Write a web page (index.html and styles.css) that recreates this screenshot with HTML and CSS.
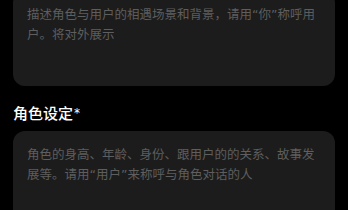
FILE: index.html
```html
<!DOCTYPE html>
<html lang="zh-CN">

<head>
    <meta charset="UTF-8">
    <meta name="viewport" content="width=device-width, initial-scale=1.0">
    <title>角色设定</title>
    <link rel="stylesheet" href="styles.css">
</head>

<body>
    <div class="form">
        <div class="field field--first">
            <div class="text-box">
                <span class="placeholder">描述角色与用户的相遇场景和背景，请用“你”称呼用户。将对外展示</span>
            </div>
        </div>

        <div class="field">
            <label class="field__label">角色设定<span class="required">*</span></label>
            <div class="text-box">
                <span class="placeholder">角色的身高、年龄、身份、跟用户的的关系、故事发展等。请用“用户”来称呼与角色对话的人</span>
            </div>
        </div>
    </div>
</body>

</html>
```

FILE: styles.css
```css
html,
body {
    margin: 0;
    padding: 0;
    background-color: #000;
    overflow: hidden;
}

body {
    font-family: "DejaVu Sans", "Noto Sans CJK SC", sans-serif;
}

.form {
    padding: 0 13px;
}

.field--first {
    margin-top: -9px;
}

.field__label {
    display: block;
    margin: 17px 0 8px;
    font-family: "Noto Sans CJK SC", sans-serif;
    font-size: 15px;
    line-height: 20px;
    font-weight: 500;
    color: #fff;
}

.required {
    font-family: "DejaVu Sans", sans-serif;
    font-size: 12px;
    vertical-align: 2px;
    margin-left: 1px;
}

.text-box {
    height: 95px;
    box-sizing: border-box;
    padding: 13px 14px;
    background-color: #1c1c1c;
    border-radius: 12px;
}

.placeholder {
    font-size: 12.5px;
    line-height: 18px;
    color: #5e5e5e;
}
```
